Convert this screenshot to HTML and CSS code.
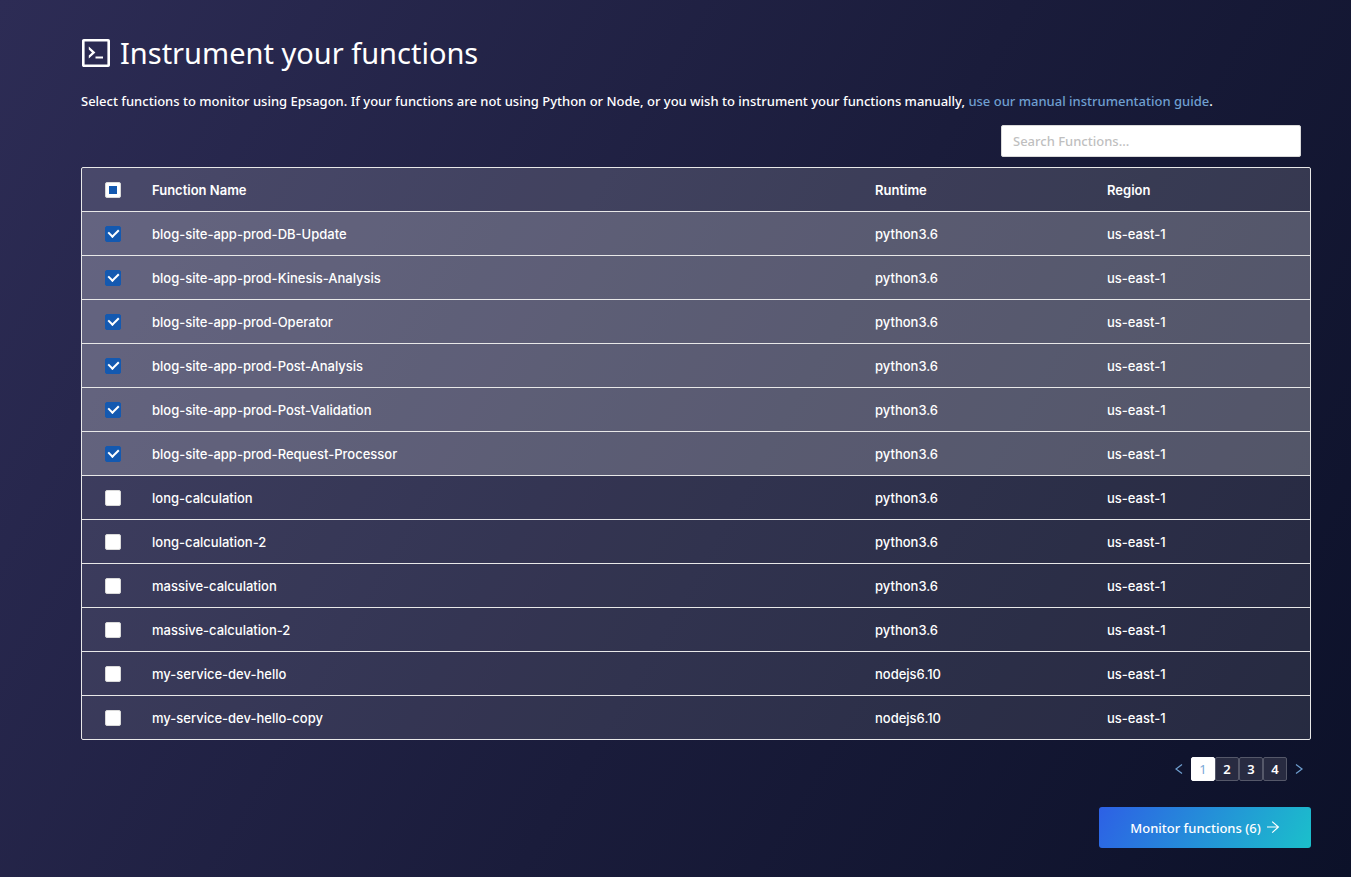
FILE: index.html
```html
<!DOCTYPE html>
<html lang="en">
<head>
<meta charset="utf-8">
<title>Instrument your functions</title>
<link rel="stylesheet" href="styles.css">
</head>
<body>
<main class="page">
  <h1 class="title">
    <svg class="title-icon" viewBox="0 0 30 30" aria-hidden="true"><rect x="2.3" y="2.3" width="25.4" height="25.4" rx="0.5" fill="none" stroke="#fff" stroke-width="2.6"/><path d="M7.8 8.6l6.6 5.9-6.6 5.9v-3l3.2-2.9-3.2-2.9zM14.5 18.4h7.5v2h-7.5z" fill="#fff"/></svg>
    Instrument your functions
  </h1>
  <p class="intro">Select functions to monitor using Epsagon. If your functions are not using Python or Node, or you wish to instrument your functions manually, <a class="link" href="#guide">use our manual instrumentation guide</a>.</p>
  <div class="search-row"><input class="search" type="text" placeholder="Search Functions..." aria-label="Search Functions"></div>
  <div class="table-frame">
    <table class="functions">
      <colgroup><col class="col-check"><col><col class="col-runtime"><col class="col-region"></colgroup>
      <thead>
        <tr><th class="check-cell"><input class="check partial" type="checkbox" aria-label="Select all functions"></th><th>Function Name</th><th>Runtime</th><th>Region</th></tr>
      </thead>
      <tbody>
        <tr class="selected"><td class="check-cell"><input class="check" type="checkbox" id="f1" checked></td><td><label for="f1">blog-site-app-prod-DB-Update</label></td><td>python3.6</td><td>us-east-1</td></tr>
        <tr class="selected"><td class="check-cell"><input class="check" type="checkbox" id="f2" checked></td><td><label for="f2">blog-site-app-prod-Kinesis-Analysis</label></td><td>python3.6</td><td>us-east-1</td></tr>
        <tr class="selected"><td class="check-cell"><input class="check" type="checkbox" id="f3" checked></td><td><label for="f3">blog-site-app-prod-Operator</label></td><td>python3.6</td><td>us-east-1</td></tr>
        <tr class="selected"><td class="check-cell"><input class="check" type="checkbox" id="f4" checked></td><td><label for="f4">blog-site-app-prod-Post-Analysis</label></td><td>python3.6</td><td>us-east-1</td></tr>
        <tr class="selected"><td class="check-cell"><input class="check" type="checkbox" id="f5" checked></td><td><label for="f5">blog-site-app-prod-Post-Validation</label></td><td>python3.6</td><td>us-east-1</td></tr>
        <tr class="selected"><td class="check-cell"><input class="check" type="checkbox" id="f6" checked></td><td><label for="f6">blog-site-app-prod-Request-Processor</label></td><td>python3.6</td><td>us-east-1</td></tr>
        <tr><td class="check-cell"><input class="check" type="checkbox" id="f7"></td><td><label for="f7">long-calculation</label></td><td>python3.6</td><td>us-east-1</td></tr>
        <tr><td class="check-cell"><input class="check" type="checkbox" id="f8"></td><td><label for="f8">long-calculation-2</label></td><td>python3.6</td><td>us-east-1</td></tr>
        <tr><td class="check-cell"><input class="check" type="checkbox" id="f9"></td><td><label for="f9">massive-calculation</label></td><td>python3.6</td><td>us-east-1</td></tr>
        <tr><td class="check-cell"><input class="check" type="checkbox" id="f10"></td><td><label for="f10">massive-calculation-2</label></td><td>python3.6</td><td>us-east-1</td></tr>
        <tr><td class="check-cell"><input class="check" type="checkbox" id="f11"></td><td><label for="f11">my-service-dev-hello</label></td><td>nodejs6.10</td><td>us-east-1</td></tr>
        <tr><td class="check-cell"><input class="check" type="checkbox" id="f12"></td><td><label for="f12">my-service-dev-hello-copy</label></td><td>nodejs6.10</td><td>us-east-1</td></tr>
      </tbody>
    </table>
  </div>
  <nav class="pager" aria-label="Pages">
    <button class="arrow" type="button" aria-label="Previous page"><svg width="12" height="12" viewBox="0 0 12 12"><path d="M9 1.5L3 6l6 4.5" fill="none" stroke="currentColor" stroke-width="1.2"/></svg></button>
    <button class="page-number current" type="button" aria-current="page">1</button>
    <button class="page-number" type="button">2</button>
    <button class="page-number" type="button">3</button>
    <button class="page-number" type="button">4</button>
    <button class="arrow" type="button" aria-label="Next page"><svg width="12" height="12" viewBox="0 0 12 12"><path d="M3 1.5L9 6l-6 4.5" fill="none" stroke="currentColor" stroke-width="1.2"/></svg></button>
  </nav>
  <div class="actions">
    <button class="monitor" type="button">Monitor functions (6)<svg width="14" height="14" viewBox="0 0 14 14" aria-hidden="true"><path d="M1 6h11.5M6.2 0.6L12.4 6l-6.2 5.6" fill="none" stroke="currentColor" stroke-width="1.2"/></svg></button>
  </div>
</main>
</body>
</html>
```
FILE: styles.css
```css
* {
  box-sizing: border-box;
}

body {
  margin: 0;
  min-height: 100vh;
  background: linear-gradient(120deg, #2d2c55 0%, #1a1c3b 55%, #0c1129 100%);
  color: #fff;
  font: 500 13px/20px "Noto Sans", "Open Sans", sans-serif;
}

.page {
  padding: 32px 40px 28px 81px;
}

.title {
  display: flex;
  align-items: center;
  gap: 9px;
  margin: 0;
  font-size: 29px;
  line-height: 42px;
  font-weight: 400;
}

.title-icon {
  width: 30px;
  height: 30px;
}

.intro {
  margin: 17px 0 14px;
}

.link {
  color: #6f9fd0;
  text-decoration: none;
}

.search-row {
  display: flex;
  justify-content: flex-end;
  margin-bottom: 10px;
  padding-right: 10px;
}

.search {
  width: 300px;
  height: 32px;
  padding: 4px 11px;
  border: 1px solid #d9d9d9;
  border-radius: 2px;
  background: #fff;
  color: #333;
  font: inherit;
}

.search::placeholder {
  color: #bfbfbf;
}

.table-frame {
  border: 1px solid #e8e8e8;
  border-radius: 2px;
}

.functions {
  width: 100%;
  table-layout: fixed;
  border-collapse: separate;
  border-spacing: 0;
  font-family: Inter, "Noto Sans", sans-serif;
}

.col-check {
  width: 62px;
}

.col-runtime {
  width: 232px;
}

.col-region {
  width: 211px;
}

th,
td {
  height: 44px;
  padding: 0 8px;
  border-bottom: 1px solid #e8e8e8;
  text-align: left;
  background: rgba(255, 255, 255, 0.1);
}

th {
  font-weight: 600;
  background: rgba(255, 255, 255, 0.15);
}

.selected td {
  background: rgba(255, 255, 255, 0.28);
}

tbody tr:last-child td {
  height: 43px;
  border-bottom: 0;
}

.check-cell {
  padding: 0;
  text-align: center;
}

.check {
  appearance: none;
  display: block;
  width: 16px;
  height: 16px;
  margin: 0 auto;
  border: 1px solid #d9d9d9;
  border-radius: 2px;
  background: #fff;
}

.check:checked {
  display: grid;
  place-items: center;
  border-color: #1459b0;
  background: #1459b0;
}

.check:checked::after {
  content: "";
  width: 5px;
  height: 8px;
  margin-bottom: 4px;
  border: solid #fff;
  border-width: 0 2px 2px 0;
  transform: rotate(45deg);
}

.check.partial {
  background: linear-gradient(#1459b0, #1459b0) center / 8px 8px no-repeat #fff;
}

.pager {
  display: flex;
  justify-content: flex-end;
  margin: 17px 0 26px;
}

.arrow,
.page-number {
  display: grid;
  place-items: center;
  width: 24px;
  height: 24px;
  padding: 0;
  border: 0;
  background: none;
  color: #6f9fd0;
  font: inherit;
}

.page-number {
  border: 1px solid #555869;
  border-radius: 2px;
  background: #282b41;
  color: #fff;
  font-weight: 600;
}

.page-number.current {
  border-color: #fff;
  background: #fff;
  color: #7ba8d8;
  font-weight: 400;
}

.actions {
  display: flex;
  justify-content: flex-end;
}

.monitor {
  display: flex;
  align-items: center;
  justify-content: center;
  gap: 5px;
  width: 212px;
  height: 41px;
  padding: 0;
  border: 0;
  border-radius: 3px;
  background: linear-gradient(120deg, #2d60e5, #1bc0cb);
  color: #fff;
  font: inherit;
}
```
